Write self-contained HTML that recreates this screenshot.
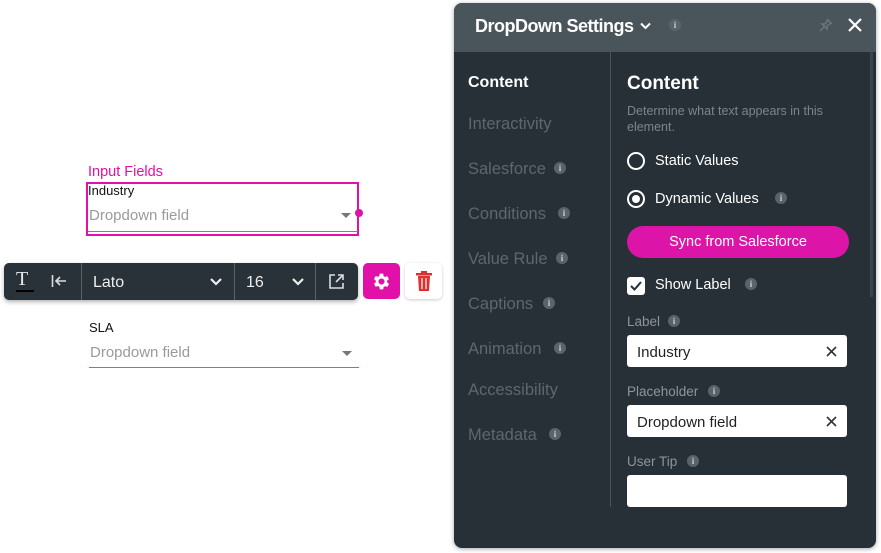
<!DOCTYPE html>
<html><head><meta charset="utf-8"><style>
*{margin:0;padding:0;box-sizing:border-box}
body{width:881px;height:553px;background:#fff;position:relative;overflow:hidden;font-family:"Liberation Sans",sans-serif}
.a{position:absolute;white-space:nowrap}
.i{position:absolute;width:12px;height:12px;border-radius:50%;background:#59636a;color:#c9cdd0;font:bold 9px "Liberation Serif",serif;text-align:center;line-height:12px}
.nav{position:absolute;left:468px;font-size:16.5px;color:#5d676e}
.lbl{position:absolute;left:627px;font-size:13.5px;color:#8d959b}
.inp{position:absolute;left:627px;width:220px;height:32px;background:#fff;border-radius:3px;font-size:15px;color:#222;padding:8px 10px}
.x{position:absolute;right:9px;top:6px;width:13px;height:13px}
</style></head><body>

<div class="a" style="left:88px;top:164px;color:#e010a8;font-size:14.5px">Input Fields</div>
<div class="a" style="left:86px;top:182px;width:273px;height:54px;border:2px solid #e010a8"></div>
<div class="a" style="left:355px;top:209px;width:8px;height:8px;border-radius:50%;background:#e010a8"></div>
<div class="a" style="left:88px;top:183px;font-size:13px;color:#111">Industry</div>
<div class="a" style="left:89px;top:207px;font-size:15px;color:#9a9a9a">Dropdown field</div>
<div class="a" style="left:341px;top:213px;border:5px solid transparent;border-top:5px solid #777"></div>
<div class="a" style="left:88px;top:231px;width:270px;height:1px;background:#3b8ee8"></div>

<div class="a" style="left:4px;top:263px;width:354px;height:37px;background:#283238;border-radius:5px;box-shadow:0 2px 4px rgba(0,0,0,.3)"></div>
<div class="a" style="left:16px;top:268px;font:20px 'Liberation Serif',serif;color:#e8e8e8">T</div>
<div class="a" style="left:16px;top:290px;width:18px;height:2px;background:#000"></div>
<svg class="a" style="left:51px;top:274px" width="16" height="14" viewBox="0 0 16 14" fill="none" stroke="#ddd" stroke-width="1.6"><path d="M1.5 1v12M15 7H5M9 3L5 7l4 4"/></svg>
<div class="a" style="left:81px;top:263px;width:1px;height:37px;background:#5a6268"></div>
<div class="a" style="left:93px;top:274px;font-size:16px;color:#eee">Lato</div>
<svg class="a" style="left:209px;top:277px" width="14" height="9" viewBox="0 0 14 9" fill="none" stroke="#eee" stroke-width="2.2"><path d="M2 2l5 5 5-5"/></svg>
<div class="a" style="left:234px;top:263px;width:1px;height:37px;background:#5a6268"></div>
<div class="a" style="left:246px;top:274px;font-size:16px;color:#eee">16</div>
<svg class="a" style="left:291px;top:277px" width="14" height="9" viewBox="0 0 14 9" fill="none" stroke="#eee" stroke-width="2.2"><path d="M2 2l5 5 5-5"/></svg>
<div class="a" style="left:315px;top:263px;width:1px;height:37px;background:#5a6268"></div>
<svg class="a" style="left:328px;top:273px" width="17" height="17" viewBox="0 0 17 17" fill="none" stroke="#ddd" stroke-width="1.6"><path d="M7 2H2v13h13v-5M10 2h5v5M15 2L8 9"/></svg>
<div class="a" style="left:363px;top:263px;width:37px;height:36px;background:#e010a8;border-radius:5px"></div>
<svg class="a" style="left:371px;top:271px" width="21" height="21" viewBox="0 0 24 24"><path fill="#fff" d="M19.4 13a7.5 7.5 0 000-2l2.1-1.6-2-3.5-2.5 1a7 7 0 00-1.7-1L15 3h-4l-.4 2.7a7 7 0 00-1.7 1l-2.5-1-2 3.5L6.5 11a7.5 7.5 0 000 2l-2.1 1.6 2 3.5 2.5-1a7 7 0 001.7 1L11 21h4l.4-2.7a7 7 0 001.7-1l2.5 1 2-3.5zM13 15.5a3.5 3.5 0 110-7 3.5 3.5 0 010 7z" transform="translate(-1 0)"/></svg>
<div class="a" style="left:405px;top:263px;width:37px;height:36px;background:#fff;border-radius:5px;box-shadow:0 1px 3px rgba(0,0,0,.2)"></div>
<svg class="a" style="left:416px;top:271px" width="16" height="20" viewBox="0 0 16 20"><rect x="0" y="2" width="16" height="2.5" fill="#e0302e"/><rect x="5" y="0" width="6" height="2.5" fill="#e0302e"/><path d="M2 5h12l-1 15H3z" fill="#e0302e"/><path d="M6 7v11M10 7v11" stroke="#fff" stroke-width="1.2"/></svg>

<div class="a" style="left:89px;top:320px;font-size:13px;color:#111">SLA</div>
<div class="a" style="left:90px;top:344px;font-size:15px;color:#9a9a9a">Dropdown field</div>
<div class="a" style="left:342px;top:351px;border:5px solid transparent;border-top:5px solid #777"></div>
<div class="a" style="left:89px;top:367px;width:270px;height:1px;background:#3b8ee8"></div>

<!-- panel -->
<div class="a" style="left:454px;top:3px;width:422px;height:545px;background:#273036;border-radius:8px;box-shadow:0 1px 5px rgba(0,0,0,.35);overflow:hidden">
 <div style="position:absolute;left:0;top:0;width:422px;height:49px;background:#4a555b"></div>
 <div style="position:absolute;left:416px;top:49px;width:3px;height:245px;background:#3a444a"></div>
</div>
<div class="a" style="left:475px;top:16px;font-size:18px;font-weight:bold;color:#fff;letter-spacing:-.5px">DropDown Settings</div>
<svg class="a" style="left:639px;top:22px" width="13" height="8" viewBox="0 0 13 8" fill="none" stroke="#fff" stroke-width="2"><path d="M2 1.5l4.5 4.5 4.5-4.5"/></svg>
<div class="i" style="left:669px;top:19px">i</div>
<svg class="a" style="left:818px;top:17px" width="16" height="16" viewBox="0 0 16 16" fill="none" stroke="#6a747a" stroke-width="1.5"><path d="M9 2l5 5M10 3l-3 4-3 0 5 5 0-3 4-3M6.5 9.5L2 14"/></svg>
<svg class="a" style="left:847px;top:17px" width="16" height="16" viewBox="0 0 16 16" stroke="#fff" stroke-width="2.2"><path d="M2 2l12 12M14 2L2 14"/></svg>
<div class="a" style="left:610px;top:52px;width:1px;height:455px;background:#4a545a"></div>

<div class="nav" style="top:74px;color:#fff;font-weight:bold;font-size:16px">Content</div>
<div class="nav" style="top:115px">Interactivity</div>
<div class="nav" style="top:160px">Salesforce</div><div class="i" style="left:554px;top:162px">i</div>
<div class="nav" style="top:205px">Conditions</div><div class="i" style="left:558px;top:207px">i</div>
<div class="nav" style="top:250px">Value Rule</div><div class="i" style="left:556px;top:252px">i</div>
<div class="nav" style="top:295px">Captions</div><div class="i" style="left:543px;top:297px">i</div>
<div class="nav" style="top:340px">Animation</div><div class="i" style="left:554px;top:342px">i</div>
<div class="nav" style="top:381px">Accessibility</div>
<div class="nav" style="top:426px">Metadata</div><div class="i" style="left:549px;top:428px">i</div>

<div class="a" style="left:627px;top:73px;font-size:19px;font-weight:bold;color:#fff">Content</div>
<div class="a" style="left:627px;top:103px;font-size:12.5px;color:#7b858b;line-height:16px">Determine what text appears in this<br>element.</div>
<div class="a" style="left:627px;top:152px;width:18px;height:18px;border:2px solid #fff;border-radius:50%"></div>
<div class="a" style="left:655px;top:153px;font-size:14.5px;color:#fff">Static Values</div>
<div class="a" style="left:627px;top:190px;width:18px;height:18px;border:2px solid #fff;border-radius:50%"><div style="margin:3px;width:8px;height:8px;border-radius:50%;background:#fff"></div></div>
<div class="a" style="left:655px;top:191px;font-size:14.5px;color:#fff">Dynamic Values</div><div class="i" style="left:775px;top:192px">i</div>
<div class="a" style="left:627px;top:226px;width:222px;height:32px;background:#dc14a8;border-radius:16px;color:#fff;font-size:14.5px;text-align:center;line-height:32px">Sync from Salesforce</div>
<div class="a" style="left:627px;top:277px;width:18px;height:18px;background:#fff;border-radius:3px"></div>
<svg class="a" style="left:629px;top:279px" width="14" height="14" viewBox="0 0 14 14" fill="none" stroke="#273036" stroke-width="2"><path d="M2 7l3.5 3.5L12 3"/></svg>
<div class="a" style="left:655px;top:277px;font-size:14.5px;color:#fff">Show Label</div><div class="i" style="left:745px;top:278px">i</div>

<div class="lbl" style="top:314px">Label</div><div class="i" style="left:668px;top:315px">i</div>
<div class="inp" style="top:335px;padding-top:9px">Industry<svg class="x" style="top:10px" viewBox="0 0 13 13" stroke="#333" stroke-width="1.6"><path d="M2 2l9 9M11 2l-9 9"/></svg></div>
<div class="lbl" style="top:384px">Placeholder</div><div class="i" style="left:708px;top:385px">i</div>
<div class="inp" style="top:405px;padding-top:9px">Dropdown field<svg class="x" style="top:10px" viewBox="0 0 13 13" stroke="#333" stroke-width="1.6"><path d="M2 2l9 9M11 2l-9 9"/></svg></div>
<div class="lbl" style="top:454px">User Tip</div><div class="i" style="left:687px;top:455px">i</div>
<div class="inp" style="top:475px"></div>
</body></html>
